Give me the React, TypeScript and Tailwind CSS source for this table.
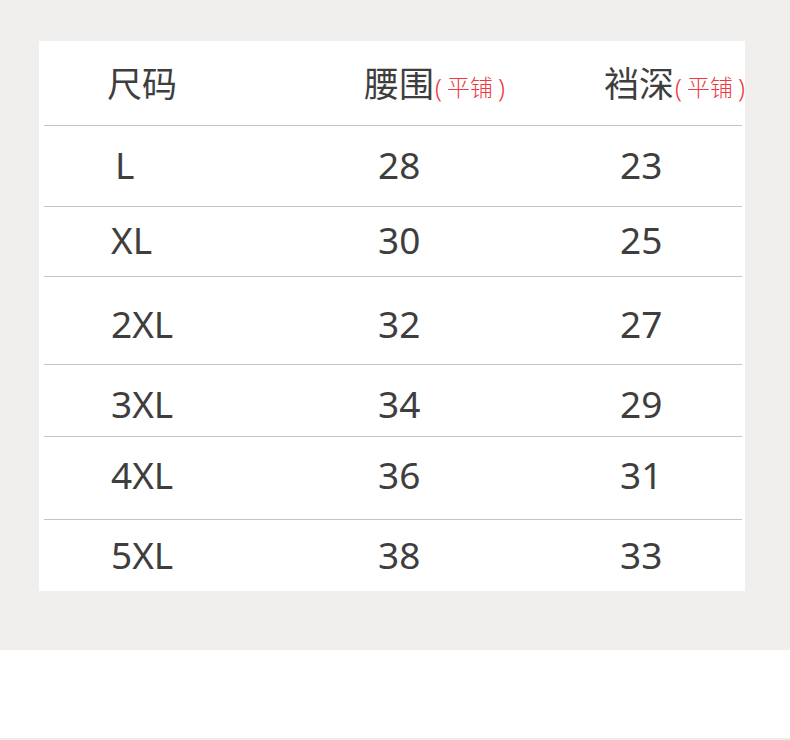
const rows = [
  { size: "L", waist: "28", rise: "23", h: "h-[81px]", pad: "pb-[4px]", indent: "pl-[71px]", border: true },
  { size: "XL", waist: "30", rise: "25", h: "h-[70px]", pad: "pb-[5px]", indent: "pl-[67px]", border: true },
  { size: "2XL", waist: "32", rise: "27", h: "h-[88px]", pad: "pt-[5px]", indent: "pl-[67px]", border: true },
  { size: "3XL", waist: "34", rise: "29", h: "h-[72px]", pad: "pt-[6px]", indent: "pl-[67px]", border: true },
  { size: "4XL", waist: "36", rise: "31", h: "h-[83px]", pad: "pb-[7px]", indent: "pl-[67px]", border: true },
  { size: "5XL", waist: "38", rise: "33", h: "h-[71px]", pad: "pb-[2px]", indent: "pl-[67px]", border: false },
];

function Note() {
  return (
    <span className="ml-[1px] flex items-center pb-[1px] text-[23px] font-light text-[#ec3a40]">
      <span className="text-[25px]">(</span>
      <span className="mx-[5px]">平铺</span>
      <span className="text-[25px]">)</span>
    </span>
  );
}

export default function App() {
  return (
    <div className="w-[790px] bg-white font-['Noto_Sans','Noto_Sans_CJK_SC',sans-serif] text-[#3e3e3e]">
      <div className="h-[650px] bg-[#f0efed] pt-[41px]">
        <div className="ml-[39px] w-[706px] bg-white pl-[5px] pr-[3px]">
          <div className="flex h-[85px] items-center whitespace-nowrap border-b border-[#c4c4c4] text-[35px] leading-none">
            <div className="w-[320px] shrink-0 pl-[63px]">尺码</div>
            <div className="flex w-[240px] shrink-0 items-end">
              腰围
              <Note />
            </div>
            <div className="flex shrink-0 items-end">
              裆深
              <Note />
            </div>
          </div>
          {rows.map((r) => (
            <div
              key={r.size}
              className={`flex items-center text-[37px] leading-none ${r.h} ${r.pad} ${
                r.border ? "border-b border-[#c4c4c4]" : ""
              }`}
            >
              <div className={`w-[334px] ${r.indent}`}>{r.size}</div>
              <div className="w-[242px]">{r.waist}</div>
              <div>{r.rise}</div>
            </div>
          ))}
        </div>
      </div>
      <div className="h-[88px] bg-white" />
      <div className="h-[2px] bg-[#ececec]" />
    </div>
  );
}
